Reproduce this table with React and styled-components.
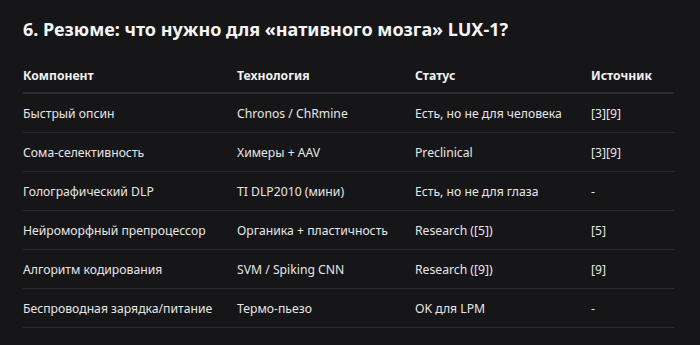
import React from "react";
import styled, { createGlobalStyle } from "styled-components";

const Global = createGlobalStyle`
  html, body { margin: 0; padding: 0; background: #161618; }
  body { font-family: "Noto Sans", "Open Sans", sans-serif; color: #ececec; }
`;

const Page = styled.div`
  width: 700px;
  height: 345px;
  box-sizing: border-box;
  padding: 16px 26px 0 23px;
  background: #161618;
  overflow: hidden;
`;

const Title = styled.h2`
  margin: 0;
  font-size: 18px;
  line-height: 26px;
  font-weight: 700;
  color: #f4f4f4;
  letter-spacing: 0;
`;

const Table = styled.table`
  margin-top: 12px;
  width: 651px;
  border-collapse: collapse;
  table-layout: fixed;
`;

const Th = styled.th`
  text-align: left;
  font-weight: 700;
  font-size: 12.2px;
  height: 34px;
  padding: 4px 0 0;
  border-bottom: 2px solid #2c2c2f;
  color: #f0f0f0;
  width: ${(p) => p.$w}px;
`;

const Td = styled.td`
  font-size: 12.2px;
  height: 38px;
  padding: 0;
  border-bottom: 1px solid #2c2c2f;
  color: #e6e6e6;
  white-space: nowrap;
`;

const cols = [
  ["Компонент", 214],
  ["Технология", 178],
  ["Статус", 176],
  ["Источник", 83],
];

const rows = [
  ["Быстрый опсин", "Chronos / ChRmine", "Есть, но не для человека", "[3][9]"],
  ["Сома-селективность", "Химеры + AAV", "Preclinical", "[3][9]"],
  ["Голографический DLP", "TI DLP2010 (мини)", "Есть, но не для глаза", "-"],
  ["Нейроморфный препроцессор", "Органика + пластичность", "Research ([5])", "[5]"],
  ["Алгоритм кодирования", "SVM / Spiking CNN", "Research ([9])", "[9]"],
  ["Беспроводная зарядка/питание", "Термо-пьезо", "OK для LPM", "-"],
];

export default function App() {
  return (
    <>
      <Global />
      <Page>
        <Title>6. Резюме: что нужно для «нативного мозга» LUX-1?</Title>
        <Table>
          <thead>
            <tr>
              {cols.map(([c, w]) => (
                <Th key={c} $w={w}>{c}</Th>
              ))}
            </tr>
          </thead>
          <tbody>
            {rows.map((r) => (
              <tr key={r[0]}>
                {r.map((c, i) => (
                  <Td key={i}>{c}</Td>
                ))}
              </tr>
            ))}
          </tbody>
        </Table>
      </Page>
    </>
  );
}
